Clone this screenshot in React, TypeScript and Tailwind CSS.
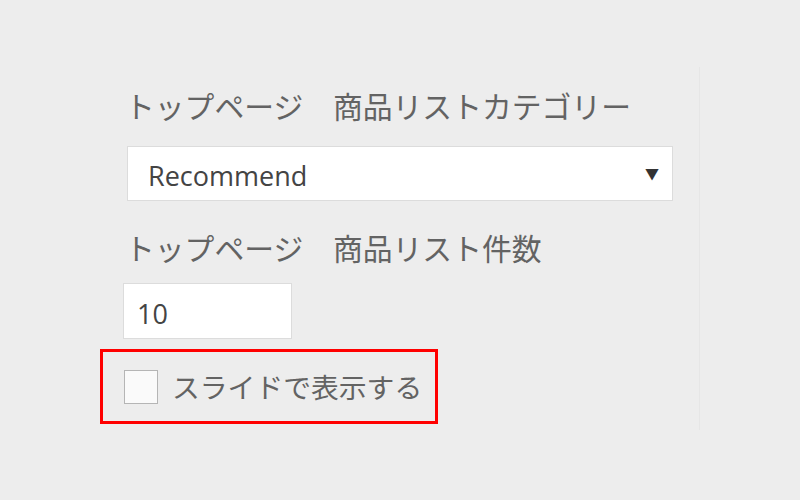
import React from 'react';

const jp = { fontFamily: '"Noto Sans CJK JP", "Noto Sans", sans-serif' };
const latin = { fontFamily: '"Open Sans", "Noto Sans", sans-serif' };

export default function App() {
  return (
    <div className="w-[800px] h-[500px] bg-[#ededed] overflow-hidden">
      <div className="ml-[100px] mt-[67px] w-[600px] h-[363px] border-r border-[#e6e6e6] flex flex-col" style={jp}>
        <div className="pl-[25px] pt-[18px] text-[29.8px] leading-[40px] text-[#636363]">トップページ　商品リストカテゴリー</div>
        <div className="ml-[27px] mt-[21px] w-[546px] h-[55px] bg-white border border-[#dcdcdc] flex items-center justify-between pl-[20px] pr-[13px]">
          <span className="mt-[4px] text-[27px] leading-[32px] text-[#444]" style={latin}>Recommend</span>
          <span className="text-[14px] text-[#333]">▼</span>
        </div>
        <div className="pl-[25px] mt-[26px] text-[29.8px] leading-[40px] text-[#636363]">トップページ　商品リスト件数</div>
        <div className="ml-[23px] mt-[16px] w-[169px] h-[56px] bg-white border border-[#dcdcdc] flex items-center pl-[13px]">
          <span className="mt-[5px] text-[27px] leading-[32px] text-[#444]" style={latin}>10</span>
        </div>
        <div className="mt-[10px] w-[338px] h-[75px] border-[3px] border-[#ff0000] flex items-center pl-[21px] gap-[14px]">
          <div className="w-[34px] h-[34px] border border-[#b5b5b5] bg-[#fafafa]" />
          <span className="text-[27.8px] text-[#636363]">スライドで表示する</span>
        </div>
      </div>
    </div>
  );
}
